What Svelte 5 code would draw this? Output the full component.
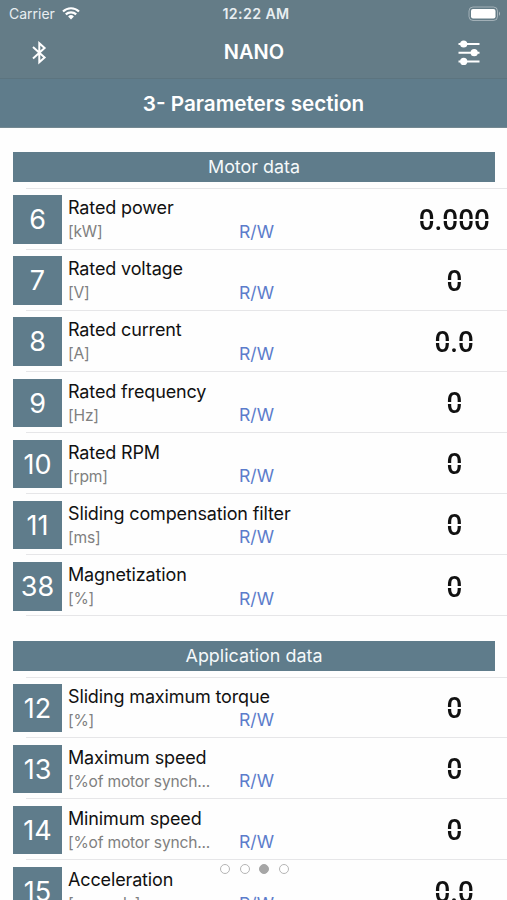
<script>
	const sections = [
		{
			title: 'Motor data',
			params: [
				{ id: 6, name: 'Rated power', unit: '[kW]', value: '0.000' },
				{ id: 7, name: 'Rated voltage', unit: '[V]', value: '0' },
				{ id: 8, name: 'Rated current', unit: '[A]', value: '0.0' },
				{ id: 9, name: 'Rated frequency', unit: '[Hz]', value: '0' },
				{ id: 10, name: 'Rated RPM', unit: '[rpm]', value: '0' },
				{ id: 11, name: 'Sliding compensation filter', unit: '[ms]', value: '0' },
				{ id: 38, name: 'Magnetization', unit: '[%]', value: '0' }
			]
		},
		{
			title: 'Application data',
			params: [
				{ id: 12, name: 'Sliding maximum torque', unit: '[%]', value: '0' },
				{ id: 13, name: 'Maximum speed', unit: '[%of motor synch...', value: '0' },
				{ id: 14, name: 'Minimum speed', unit: '[%of motor synch...', value: '0' },
				{ id: 15, name: 'Acceleration', unit: '[seconds]', value: '0.0' }
			]
		}
	];

	const pages = [0, 1, 2, 3];
	let page = $state(2);
</script>

<div class="screen">
	<header>
		<div class="status">
			<div class="carrier">
				<span>Carrier</span>
				<svg width="18" height="13" viewBox="0 0 18 13" fill="none" stroke="#fff" stroke-width="2.2">
					<path d="M1 4.5a11.5 11.5 0 0 1 16 0M3.8 7.4a7.5 7.5 0 0 1 10.4 0" />
					<path d="M6.1 9.4a4.2 4.2 0 0 1 5.8 0L9 12.4z" fill="#fff" stroke="none" />
				</svg>
			</div>
			<span class="time">12:22 AM</span>
			<svg class="battery" width="33" height="16" viewBox="0 0 33 16">
				<rect x="1" y="1" width="28.5" height="13.5" rx="4" fill="none" stroke="#fff" stroke-opacity=".4" />
				<rect x="3" y="3" width="24.5" height="9.5" rx="2" fill="#fff" />
				<path d="M31 5.5q2 2.2 0 4.5z" fill="#fff" fill-opacity=".5" />
			</svg>
		</div>
		<div class="nav">
			<svg width="15" height="24" viewBox="0 0 15 24" fill="none" stroke="#fff" stroke-width="2">
				<path d="M1 6 12.6 16.4 7.3 21.2V2.2L12.6 7 1 17.4" />
			</svg>
			<h1>NANO</h1>
			<svg width="22" height="26" viewBox="0 0 22 26" stroke="#fff" stroke-width="2" fill="#fff">
				<path d="M.5 4h21M.5 12.7h21M.5 21.4h21" />
				<g stroke="none">
					<circle cx="5.7" cy="4" r="3.6" />
					<circle cx="16.2" cy="12.7" r="3.6" />
					<circle cx="5.7" cy="21.4" r="3.6" />
				</g>
			</svg>
		</div>
	</header>
	<h2>3- Parameters section</h2>

	<main>
		{#each sections as section}
			<section>
				<h3>{section.title}</h3>
				<div class="list">
					{#each section.params as param (param.id)}
						<div class="row">
							<div class="badge">{param.id}</div>
							<div class="info">
								<div class="name">{param.name}</div>
								<div class="unit">{param.unit}</div>
							</div>
							<span class="access">R/W</span>
							<div class="value"><span>{param.value}</span></div>
						</div>
					{/each}
				</div>
			</section>
		{/each}
	</main>

	<div class="dots">
		{#each pages as p}
			<button class:active={p === page} aria-label="Page {p + 1}" onclick={() => (page = p)}></button>
		{/each}
	</div>
</div>

<style>
	.screen {
		position: relative;
		height: 900px;
		overflow: hidden;
		background: #fefefe;
		color: #111;
		font-family: Inter, 'Liberation Sans', sans-serif;
	}

	h1,
	h2,
	h3 {
		margin: 0;
	}

	header {
		box-sizing: border-box;
		height: 79px;
		background: #647c87;
		border-bottom: 1px solid #5c747f;
		color: #fff;
	}

	.status {
		height: 27px;
		display: grid;
		grid-template-columns: 1fr auto 1fr;
		align-items: center;
		padding: 0 6px 0 9px;
	}

	.carrier {
		display: flex;
		align-items: center;
		gap: 7px;
		font-size: 14px;
		color: #e8eef1;
	}

	.time {
		padding-left: 2px;
		font-size: 14.2px;
		font-weight: 600;
		letter-spacing: 0.4px;
		color: #e8eef1;
	}

	.battery {
		justify-self: end;
	}

	.nav {
		height: 51px;
		display: grid;
		grid-template-columns: 1fr auto 1fr;
		align-items: center;
		padding: 0 27px 0 32px;
	}

	.nav svg:last-child {
		justify-self: end;
	}

	h1 {
		font-size: 20px;
		line-height: 51px;
		font-weight: 600;
		padding-right: 4px;
	}

	h2 {
		box-sizing: border-box;
		height: 49px;
		line-height: 50px;
		text-align: center;
		font-size: 20.7px;
		font-weight: 600;
		color: #fff;
		background: #5f7c8b;
		border-bottom: 1px solid #748992;
	}

	main {
		padding-top: 24.4px;
	}

	section {
		margin-bottom: 24.4px;
	}

	h3 {
		height: 30px;
		margin: 0 12px 6px 13px;
		line-height: 30px;
		text-align: center;
		font-size: 17.9px;
		font-weight: 400;
		color: #f5f9fa;
		background: #5f7c8b;
	}

	.list {
		background: linear-gradient(#e6e6e8, #e6e6e8) 26px 0 / 100% 1px no-repeat;
	}

	.row {
		box-sizing: border-box;
		height: 61.16px;
		display: grid;
		grid-template-columns: 49px 171px 60px 1fr;
		padding: 6.7px 0 0 13px;
		background: linear-gradient(#e6e6e8, #e6e6e8) 26px 100% / 100% 1px no-repeat;
	}

	.badge {
		height: 48.5px;
		line-height: 50px;
		text-align: center;
		font-size: 27px;
		color: #fff;
		background: #5f7c8b;
	}

	.info {
		padding-left: 6px;
		white-space: nowrap;
	}

	.name {
		height: 25px;
		line-height: 25px;
		font-size: 18px;
		letter-spacing: -0.14px;
	}

	.unit {
		line-height: 24px;
		font-size: 15.6px;
		letter-spacing: -0.2px;
		color: #808080;
	}

	.access {
		padding: 24.5px 0 0 6px;
		line-height: 24px;
		font-size: 17.6px;
		color: #5c7ccb;
	}

	.value {
		justify-self: end;
		width: 105px;
		height: 49px;
		display: flex;
		align-items: center;
		justify-content: center;
	}

	/* the strip across the middle splits the digits into upper and lower segments */
	.value span {
		height: 36px;
		line-height: 36px;
		font-family: Roboto, sans-serif;
		font-size: 30px;
		font-weight: 500;
		transform: scaleX(0.93);
		color: transparent;
		background: linear-gradient(#111 17px, transparent 17px 19px, #111 19px);
		background-clip: text;
	}

	.dots {
		position: absolute;
		left: 220px;
		top: 864px;
		display: flex;
		gap: 9.7px;
	}

	.dots button {
		box-sizing: border-box;
		width: 10px;
		height: 10px;
		padding: 0;
		border: 1.5px solid #b5b5b5;
		border-radius: 50%;
		background: #fff;
	}

	.dots .active {
		background: #a6a6a6;
		border-color: #a6a6a6;
	}
</style>
